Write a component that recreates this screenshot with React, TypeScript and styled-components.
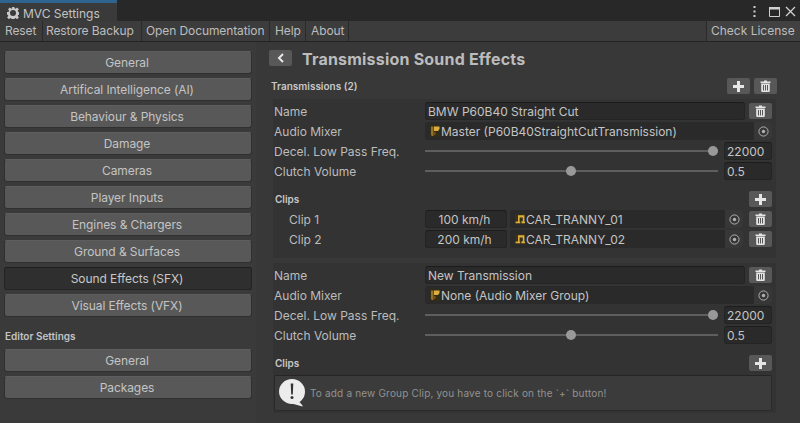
import React from "react";
import styled, { createGlobalStyle } from "styled-components";

const Global = createGlobalStyle`
  html, body { margin: 0; padding: 0; background: #383838; }
  * { box-sizing: border-box; }
  #root { width: 800px; height: 423px; overflow: hidden; font-family: Inter, "Liberation Sans", sans-serif; font-size: 12px; color: #c8c8c8; }
`;

const Window = styled.div`display:flex;flex-direction:column;width:800px;height:423px;background:#383838;`;
const TitleBar = styled.div`display:flex;align-items:stretch;height:21px;background:#282828;`;
const Tab = styled.div`
  width:117px;display:flex;align-items:center;gap:4px;padding-left:7px;padding-top:2px;
  background:#3a3a3a;border-top:3px solid #2d6590;color:#c4c4c4;font-size:12px;
`;
const WindowControls = styled.div`margin-left:auto;display:flex;align-items:center;gap:5px;padding-right:4px;padding-top:2px;`;
const MenuBar = styled.div`display:flex;height:21px;background:#3c3c3c;border-bottom:1px solid #232323;`;
const MenuItem = styled.div<{ $w: number; $pad: number; $end?: boolean }>`
  display:flex;align-items:center;width:${p => p.$w}px;padding:0 0 1px ${p => p.$pad}px;height:20px;color:#bdbdbd;letter-spacing:-.1px;white-space:nowrap;
  border-right:1px solid #2a2a2a;
  ${p => p.$end ? "margin-left:auto;border-right:none;border-left:1px solid #2a2a2a;background:#414141;letter-spacing:0;" : ""}
`;
const Body = styled.div`flex:1;display:flex;min-height:0;`;
const Sidebar = styled.div`width:256px;padding:9px 4px 0;display:flex;flex-direction:column;gap:4px;background:#3a3a3a;`;
const NavButton = styled.button<{ $active?: boolean }>`
  height:23px;width:248px;margin:0;padding:0 2px 1px 0;border-radius:3px;font:inherit;font-size:12px;letter-spacing:-.08px;
  color:${p => p.$active ? "#c8c8c8" : "#c4c4c4"};
  background:${p => p.$active ? "#2f2f2f" : "#585858"};
  border:1px solid ${p => p.$active ? "#242424" : "#303030"};
  border-top-color:${p => p.$active ? "#1e1e1e" : "#5e5e5e"};
`;
const SideHeading = styled.div`font-size:10px;font-weight:600;color:#c4c4c4;padding:0 1px;margin:8px 0 1px 0;height:15px;line-height:15px;`;
const Main = styled.div`flex:1;padding:8px 23px 0 15px;display:flex;flex-direction:column;background:#383838;`;
const Header = styled.div`display:flex;align-items:center;gap:10px;height:16px;margin:0 0 12px -2px;`;
const BackButton = styled.div`width:23px;height:16px;border-radius:2px;background:#585858;display:flex;align-items:center;justify-content:center;`;
const Title = styled.div`font-size:16px;font-weight:700;color:#bcbcbc;letter-spacing:.2px;padding-top:2px;white-space:nowrap;`;
const SectionHead = styled.div`display:flex;align-items:center;justify-content:space-between;height:16px;margin-bottom:5px;`;
const SmallBold = styled.div`font-size:10px;font-weight:600;color:#c8c8c8;`;
const IconGroup = styled.div`display:flex;gap:4px;`;
const IconButton = styled.div`width:23px;height:16px;border-radius:2px;background:#585858;display:flex;align-items:center;justify-content:center;flex:none;`;
const Card = styled.div<{ $bottom: number }>`background:#333333;padding:3px 4px ${p => p.$bottom}px 1px;width:503px;margin:0 0 5px 2px;display:flex;flex-direction:column;`;
const Row = styled.div`display:flex;align-items:center;height:18px;margin-bottom:2px;gap:4px;`;
const Label = styled.div<{ $indent?: boolean }>`width:147px;flex:none;color:#bcbcbc;padding-left:${p => p.$indent ? "15px" : "0"};`;
const Field = styled.div<{ $w?: number; $center?: boolean }>`
  height:18px;background:#2a2a2a;border:1px solid #242424;border-top-color:#1c1c1c;border-radius:3px;
  display:flex;align-items:center;color:#c4c4c4;padding:0 2px;white-space:nowrap;
  ${p => p.$w ? `width:${p.$w}px;flex:none;` : "flex:1;min-width:0;"}
  ${p => p.$center ? "justify-content:center;padding-right:5px;" : ""}
`;
const ObjectField = styled.div<{ $tight?: boolean }>`
  height:18px;background:#2a2a2a;border-radius:3px;display:flex;align-items:center;gap:1px;padding-left:5px;
  color:#c4c4c4;flex:1;min-width:0;white-space:nowrap;${p => p.$tight ? "margin:0 2px 0 -1px;" : ""}
`;
const Picker = styled.div`margin-left:auto;width:18px;height:18px;background:#373737;border-radius:0 3px 3px 0;display:flex;align-items:center;justify-content:center;`;
const Slider = styled.div`position:relative;flex:1;height:18px;display:flex;align-items:center;margin-right:2px;`;
const Track = styled.div`width:100%;height:2px;background:#5e5e5e;`;
const Knob = styled.div<{ $left: number }>`position:absolute;left:${p => p.$left}px;top:4px;width:10px;height:10px;border-radius:50%;background:#999;`;
const ClipsHead = styled.div`display:flex;align-items:center;justify-content:space-between;height:16px;margin:9px 0 3px 1px;`;
const Help = styled.div`height:36px;margin-top:1px;border:1px solid #2a2a2a;border-top-color:#252525;background:#3b3b3b;border-radius:2px;display:flex;align-items:center;gap:5px;padding-left:4px;font-size:10px;color:#929292;letter-spacing:.18px;white-space:nowrap;`;

const Trash = () => (
  <svg width="11" height="12" viewBox="0 0 11 12"><path d="M4 .5h3v1h3.500v1.400H.5V1.500H4zM1.200 3.600h8.600V11a1 1 0 0 1-1 1H2.200a1 1 0 0 1-1-1zM3 5v5.500h1V5zm2 0v5.500h1V5zm2 0v5.500h1V5z" fill="#e4e4e4" fillRule="evenodd"/></svg>
);
const Plus = () => (
  <svg width="11" height="11" viewBox="0 0 11 11"><path d="M4 0h3v4h4v3H7v4H4V7H0V4h4z" fill="#e6e6e6"/></svg>
);
const Target = () => (
  <svg width="11" height="11" viewBox="0 0 11 11"><circle cx="5.500" cy="5.500" r="4.600" fill="none" stroke="#b0b0b0"/><circle cx="5.500" cy="5.500" r="1.700" fill="#b0b0b0"/></svg>
);
const Mixer = () => (
  <svg width="10" height="12" viewBox="0 0 10 12"><rect x="0" y="0" width="10" height="12" rx="1" fill="#332c16"/><path d="M1 1.500h2.500V11H2L1 10z" fill="#94702a"/><path d="M4 1.500h5.500V4L8 6H4z" fill="#dcae42"/><rect x="4" y="7" width="1.600" height="3" fill="#6e5320"/></svg>
);
const Note = () => (
  <svg width="10" height="10" viewBox="0 0 10 10"><rect width="10" height="10" rx="1" fill="#37301a"/><path d="M3 1.200h6.400v6.600H10v1.400H6.500V7.300h1.300V3.400H4.600v4.400h.6v1.400H.6V7.500H3z" fill="#dcae3c"/></svg>
);
const Gear = () => (
  <svg width="12" height="12" viewBox="0 0 24 24"><path fill="#cacaca" fillRule="evenodd" d="M9.500 0h5l.7 3.600 1.900.8L20.200 2l3.500 3.500-2.300 3.200.8 1.900 3.800.6v5l-3.800.6-.8 1.900 2.300 3.200-3.500 3.500-3.100-2.400-1.900.8-.7 3.600h-5l-.7-3.600-1.900-.8-3.100 2.400-3.500-3.500 2.300-3.200-.8-1.900L-.2 16v-5l3.800-.6.800-1.900L2.100 5.500 5.600 2l3.100 2.400 1.900-.8zM12 7a6 6 0 1 0 0 12 6 6 0 0 0 0-12z" transform="translate(0 -1)"/></svg>
);
const Dots = () => (
  <svg width="3" height="11" viewBox="0 0 3 11"><path d="M.5 0h2v2h-2zM.5 4.500h2v2h-2zM.5 9h2v2h-2z" fill="#d0d0d0"/></svg>
);
const Maximize = () => (
  <svg width="11" height="10" viewBox="0 0 11 10"><path d="M.5.5h10v9H.5z" fill="none" stroke="#d0d0d0"/><path d="M0 0h11v2.500H0z" fill="#d0d0d0"/></svg>
);
const Close = () => (
  <svg width="11" height="11" viewBox="0 0 11 11"><path d="M1 1l9 9M10 1l-9 9" stroke="#d0d0d0" strokeWidth="1.300"/></svg>
);
const Back = () => (
  <svg width="8" height="10" viewBox="0 0 8 10"><path d="M6 1 2 5l4 4" fill="none" stroke="#e8e8e8" strokeWidth="2"/></svg>
);
const HelpIcon = () => (
  <svg width="26" height="28" viewBox="0 0 26 28"><path d="M13 0a13 12.500 0 0 1 13 12.500c0 5-2.500 8.500-5.500 10.500l3 3.500v1L14.500 25H13A13 12.500 0 0 1 13 0z" fill="#ececec"/><path d="M11.700 4.500h2.600l-.5 11h-1.600z" fill="#333"/><circle cx="13" cy="18.500" r="1.500" fill="#333"/></svg>
);

function Section({ name, mixer, bottom, children }: { name: string; mixer: string; bottom: number; children: React.ReactNode }) {
  return (
    <Card $bottom={bottom}>
      <Row><Label>Name</Label><Field>{name}</Field><IconButton><Trash /></IconButton></Row>
      <Row><Label>Audio Mixer</Label><ObjectField><Mixer />{mixer}<Picker><Target /></Picker></ObjectField></Row>
      <Row><Label>Decel. Low Pass Freq.</Label><Slider><Track /><Knob $left={283} /></Slider><Field $w={48}>22000</Field></Row>
      <Row><Label>Clutch Volume</Label><Slider><Track /><Knob $left={141} /></Slider><Field $w={48}>0.5</Field></Row>
      {children}
    </Card>
  );
}

function Clip({ label, speed, file }: { label: string; speed: string; file: string }) {
  return (
    <Row>
      <Label $indent>{label}</Label>
      <Field $w={82} $center>{speed}</Field>
      <ObjectField $tight><Note />{file}<Picker><Target /></Picker></ObjectField>
      <IconButton><Trash /></IconButton>
    </Row>
  );
}

const nav = ["General", "Artifical Intelligence (AI)", "Behaviour & Physics", "Damage", "Cameras", "Player Inputs", "Engines & Chargers", "Ground & Surfaces", "Sound Effects (SFX)", "Visual Effects (VFX)"];

export default function App() {
  return (
    <Window>
      <Global />
      <TitleBar>
        <Tab><Gear />MVC Settings</Tab>
        <WindowControls><Dots /><span style={{ width: 3 }} /><Maximize /><Close /></WindowControls>
      </TitleBar>
      <MenuBar>
        <MenuItem $w={43} $pad={5}>Reset</MenuItem>
        <MenuItem $w={99} $pad={3}>Restore Backup</MenuItem>
        <MenuItem $w={128} $pad={4}>Open Documentation</MenuItem>
        <MenuItem $w={36} $pad={5}>Help</MenuItem>
        <MenuItem $w={43} $pad={5}>About</MenuItem>
        <MenuItem $w={94} $pad={4} $end>Check License</MenuItem>
      </MenuBar>
      <Body>
        <Sidebar>
          {nav.map(n => <NavButton key={n} $active={n.startsWith("Sound")}>{n}</NavButton>)}
          <SideHeading>Editor Settings</SideHeading>
          <NavButton>General</NavButton>
          <NavButton>Packages</NavButton>
        </Sidebar>
        <Main>
          <Header><BackButton><Back /></BackButton><Title>Transmission Sound Effects</Title></Header>
          <SectionHead>
            <SmallBold>Transmissions (2)</SmallBold>
            <IconGroup><IconButton><Plus /></IconButton><IconButton><Trash /></IconButton></IconGroup>
          </SectionHead>
          <Section name="BMW P60B40 Straight Cut" mixer="Master (P60B40StraightCutTransmission)" bottom={8}>
            <ClipsHead><SmallBold>Clips</SmallBold><IconButton><Plus /></IconButton></ClipsHead>
            <Clip label="Clip 1" speed="100 km/h" file="CAR_TRANNY_01" />
            <Clip label="Clip 2" speed="200 km/h" file="CAR_TRANNY_02" />
          </Section>
          <Section name="New Transmission" mixer="None (Audio Mixer Group)" bottom={2}>
            <ClipsHead><SmallBold>Clips</SmallBold><IconButton><Plus /></IconButton></ClipsHead>
            <Help><HelpIcon />{"To add a new Group Clip, you have to click on the `+` button!"}</Help>
          </Section>
        </Main>
      </Body>
    </Window>
  );
}
